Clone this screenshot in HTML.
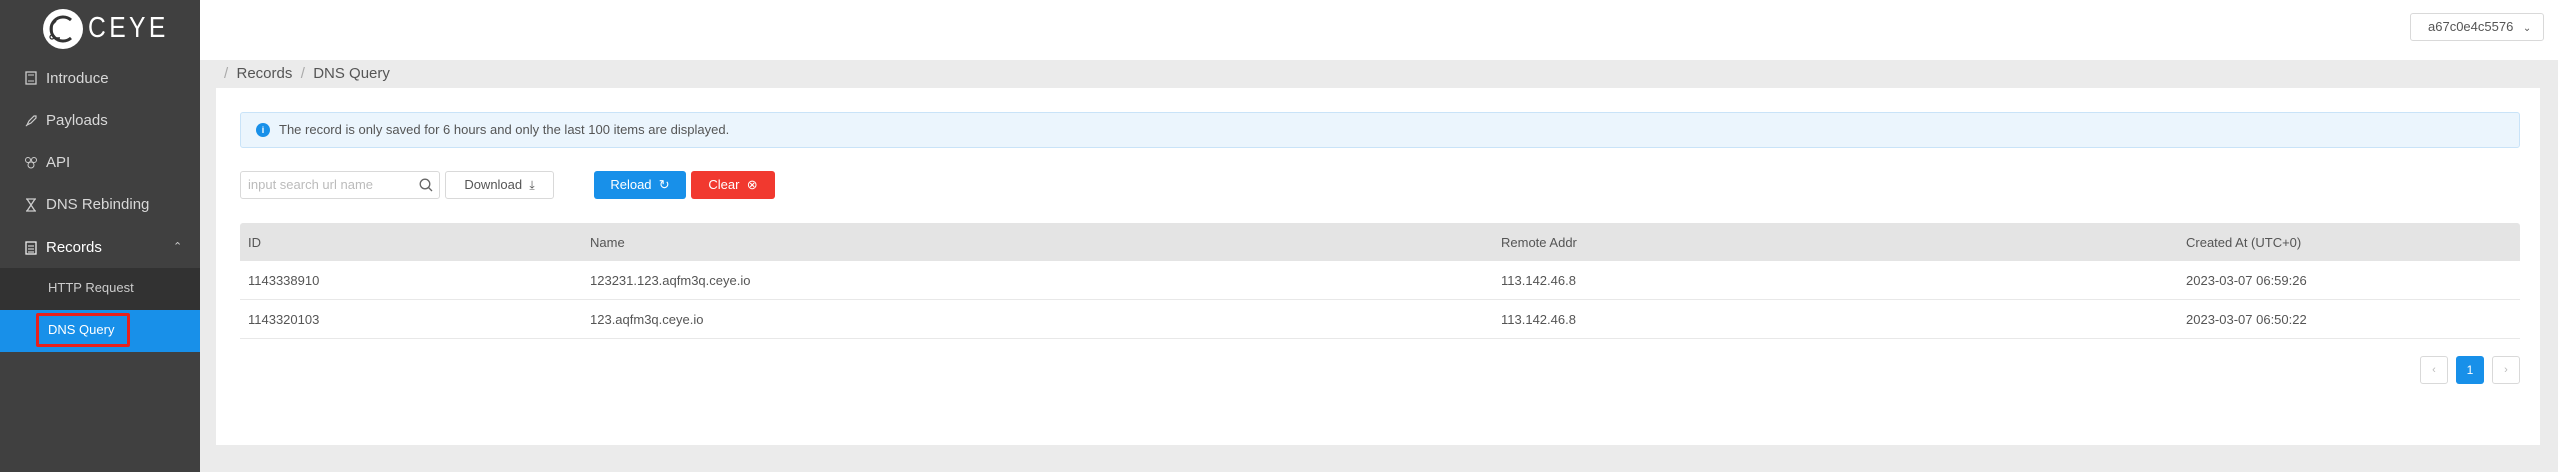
<!DOCTYPE html>
<html><head><meta charset="utf-8"><style>
*{box-sizing:border-box;margin:0;padding:0}
body{width:2558px;height:472px;overflow:hidden;background:#ebebeb;font-family:"Liberation Sans",sans-serif;position:relative;color:#555}
.side{position:absolute;left:0;top:0;width:200px;height:472px;background:#404040}
.abs{position:absolute}
.mi{position:absolute;left:46px;color:#d8d8d8;font-size:15px;line-height:20px}
.ic{position:absolute;left:24px;width:14px;height:14px}
.top{position:absolute;left:200px;top:0;right:0;height:60px;background:#fff}
.card{position:absolute;left:216px;top:88px;width:2324px;height:357px;background:#fff}
.btn{position:absolute;top:171px;height:28px;border-radius:3px;font-size:13px;line-height:28px;text-align:center}
.th,.td{position:absolute;font-size:13px;color:#555}
</style></head><body>
<div class="side">
  <svg class="abs" style="left:42px;top:8px" width="42" height="42" viewBox="0 0 42 42"><circle cx="21" cy="21" r="20" fill="#fff"/><path d="M29 12 A12 12 0 1 0 29 30" fill="none" stroke="#333" stroke-width="3"/><path d="M14 13 L10 17 L10 27 M12 30 L18 30" fill="none" stroke="#333" stroke-width="1.5"/><circle cx="10" cy="29" r="2" fill="none" stroke="#333" stroke-width="1.3"/></svg>
  <div class="abs" style="left:88px;top:11px;color:#fff;font-size:29px;letter-spacing:4px;line-height:34px;transform:scaleX(0.85);transform-origin:left">CEYE</div>
  <svg class="ic" style="top:71px" viewBox="0 0 14 14"><rect x="2" y="1" width="10" height="12" fill="none" stroke="#ccc" stroke-width="1.3"/><path d="M4 4h6M4 10h6" stroke="#ccc"/></svg>
  <div class="mi" style="top:69px">Introduce</div>
  <svg class="ic" style="top:114px" viewBox="0 0 14 14"><path d="M3 11 L5 7 L10 2 L12 2 L12 4 L7 9 Z M2 12 L4 10" fill="none" stroke="#ccc" stroke-width="1.2"/></svg>
  <div class="mi" style="top:111px">Payloads</div>
  <svg class="ic" style="top:156px" viewBox="0 0 14 14"><circle cx="4" cy="4" r="2.5" fill="none" stroke="#ccc"/><circle cx="10" cy="4" r="2.5" fill="none" stroke="#ccc"/><circle cx="7" cy="9" r="3" fill="none" stroke="#ccc"/></svg>
  <div class="mi" style="top:153px">API</div>
  <svg class="ic" style="top:198px" viewBox="0 0 14 14"><path d="M2 1h10M2 13h10M3 1 L11 13 M11 1 L3 13" fill="none" stroke="#ccc" stroke-width="1.3"/></svg>
  <div class="mi" style="top:195px">DNS Rebinding</div>
  <svg class="ic" style="top:241px" viewBox="0 0 14 14"><rect x="2" y="1" width="10" height="12" fill="none" stroke="#eee" stroke-width="1.3"/><path d="M4 5h6M4 8h6M4 11h6" stroke="#eee"/></svg>
  <div class="mi" style="top:238px;color:#fff">Records</div>
  <div class="abs" style="left:173px;top:240px;color:#ccc;font-size:11px">&#8963;</div>
  <div class="abs" style="left:0;top:268px;width:200px;height:42px;background:#323232"></div>
  <div class="abs" style="left:48px;top:280px;color:#ccc;font-size:13px">HTTP Request</div>
  <div class="abs" style="left:0;top:310px;width:200px;height:42px;background:#1890e9"></div>
  <div class="abs" style="left:36px;top:313px;width:94px;height:34px;border:3px solid #e8201c;border-radius:2px"></div>
  <div class="abs" style="left:48px;top:322px;color:#fff;font-size:13px">DNS Query</div>
</div>
<div class="top"></div>
<div class="abs" style="left:2410px;top:13px;width:134px;height:28px;border:1px solid #d9d9d9;border-radius:3px;background:#fff;font-size:13px;line-height:26px;color:#555;padding-left:17px">a67c0e4c5576 <span style="font-size:10px;margin-left:6px">&#8964;</span></div>
<div class="abs" style="left:224px;top:65px;font-size:15px;color:#555"><span style="color:#aaa">/</span>&nbsp; Records &nbsp;<span style="color:#aaa">/</span>&nbsp; DNS Query</div>
<div class="card"></div>
<div class="abs" style="left:240px;top:112px;width:2280px;height:36px;background:#ebf5fd;border:1px solid #c9e3f8;border-radius:3px"></div>
<div class="abs" style="left:256px;top:123px;width:14px;height:14px;border-radius:50%;background:#1890e9;color:#fff;font-size:9px;text-align:center;line-height:14px;font-weight:bold">i</div>
<div class="abs" style="left:279px;top:122px;font-size:13px;color:#555">The record is only saved for 6 hours and only the last 100 items are displayed.</div>
<div class="abs" style="left:240px;top:171px;width:200px;height:28px;border:1px solid #d9d9d9;border-radius:3px;font-size:13px;color:#bbb;line-height:26px;padding-left:7px">input search url name</div>
<svg class="abs" style="left:419px;top:178px" width="14" height="14" viewBox="0 0 14 14"><circle cx="6" cy="6" r="4.8" fill="none" stroke="#666" stroke-width="1.3"/><path d="M9.5 9.5 L13 13" stroke="#666" stroke-width="1.3"/></svg>
<div class="btn" style="left:445px;width:109px;border:1px solid #d9d9d9;color:#555;line-height:26px">Download &nbsp;<span style="font-size:12px">&#10515;</span></div>
<div class="btn" style="left:594px;width:92px;background:#1890e9;color:#fff">Reload &nbsp;&#8635;</div>
<div class="btn" style="left:691px;width:84px;background:#f1392f;color:#fff">Clear &nbsp;&#8855;</div>
<div class="abs" style="left:240px;top:223px;width:2280px;height:38px;background:#e4e4e4;border-radius:3px 3px 0 0"></div>
<div class="abs" style="left:240px;top:299px;width:2280px;height:1px;background:#e8e8e8"></div>
<div class="abs" style="left:240px;top:338px;width:2280px;height:1px;background:#e8e8e8"></div>
<div class="th" style="left:248px;top:235px">ID</div>
<div class="th" style="left:590px;top:235px">Name</div>
<div class="th" style="left:1501px;top:235px">Remote Addr</div>
<div class="th" style="left:2186px;top:235px">Created At (UTC+0)</div>
<div class="td" style="left:248px;top:273px">1143338910</div>
<div class="td" style="left:590px;top:273px">123231.123.aqfm3q.ceye.io</div>
<div class="td" style="left:1501px;top:273px">113.142.46.8</div>
<div class="td" style="left:2186px;top:273px">2023-03-07 06:59:26</div>
<div class="td" style="left:248px;top:312px">1143320103</div>
<div class="td" style="left:590px;top:312px">123.aqfm3q.ceye.io</div>
<div class="td" style="left:1501px;top:312px">113.142.46.8</div>
<div class="td" style="left:2186px;top:312px">2023-03-07 06:50:22</div>
<div class="abs" style="left:2420px;top:356px;width:28px;height:28px;border:1px solid #d9d9d9;border-radius:3px;color:#bbb;font-size:11px;text-align:center;line-height:26px">&lsaquo;</div>
<div class="abs" style="left:2456px;top:356px;width:28px;height:28px;background:#1890e9;border-radius:3px;color:#fff;font-size:12px;text-align:center;line-height:28px">1</div>
<div class="abs" style="left:2492px;top:356px;width:28px;height:28px;border:1px solid #d9d9d9;border-radius:3px;color:#bbb;font-size:11px;text-align:center;line-height:26px">&rsaquo;</div>
</body></html>
